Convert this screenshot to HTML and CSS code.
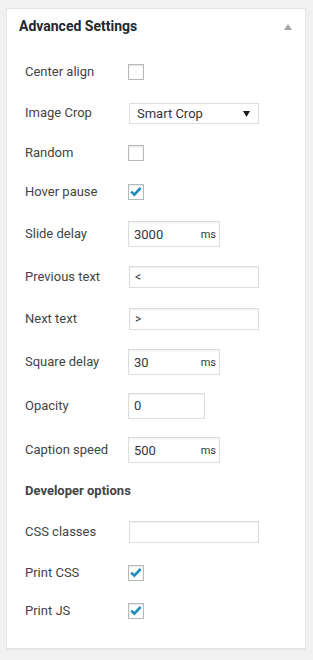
FILE: index.html
```html
<!DOCTYPE html>
<html lang="en">
<head>
<meta charset="utf-8">
<title>Advanced Settings</title>
<link rel="stylesheet" href="styles.css">
</head>
<body>
<div class="page">
  <section class="postbox">
    <header class="postbox-header">
      <h2 class="postbox-title">Advanced Settings</h2>
      <svg class="toggle" width="8" height="6" viewBox="0 0 8 6"><path d="M4 0 L8 6 L0 6 Z" fill="#a0a5aa"/></svg>
    </header>
    <div class="settings">
      <label class="lbl">Center align</label>
      <div class="ctl"><span class="checkbox"></span></div>

      <label class="lbl">Image Crop</label>
      <div class="ctl"><div class="select"><span>Smart Crop</span><svg width="7" height="6" viewBox="0 0 7 6"><path d="M0 0 L7 0 L3.5 6 Z" fill="#1e1e1e"/></svg></div></div>

      <label class="lbl">Random</label>
      <div class="ctl"><span class="checkbox"></span></div>

      <label class="lbl">Hover pause</label>
      <div class="ctl"><span class="checkbox"><svg width="14" height="14" viewBox="0 0 14 14"><path d="M2.2 6.6 L5.3 9.6 L11.6 3" fill="none" stroke="#1e8cbe" stroke-width="2.6"/></svg></span></div>

      <label class="lbl">Slide delay</label>
      <div class="ctl"><div class="unit-input"><input type="text" value="3000"><span class="unit">ms</span></div></div>

      <label class="lbl">Previous text</label>
      <div class="ctl"><input class="text-input" type="text" value="&lt;"></div>

      <label class="lbl">Next text</label>
      <div class="ctl"><input class="text-input" type="text" value="&gt;"></div>

      <label class="lbl">Square delay</label>
      <div class="ctl"><div class="unit-input"><input type="text" value="30"><span class="unit">ms</span></div></div>

      <label class="lbl">Opacity</label>
      <div class="ctl"><input class="short-input" type="text" value="0"></div>

      <label class="lbl">Caption speed</label>
      <div class="ctl"><div class="unit-input"><input type="text" value="500"><span class="unit">ms</span></div></div>

      <div class="section-title">Developer options</div>

      <label class="lbl">CSS classes</label>
      <div class="ctl"><input class="text-input" type="text" value=""></div>

      <label class="lbl">Print CSS</label>
      <div class="ctl"><span class="checkbox"><svg width="14" height="14" viewBox="0 0 14 14"><path d="M2.2 6.6 L5.3 9.6 L11.6 3" fill="none" stroke="#1e8cbe" stroke-width="2.6"/></svg></span></div>

      <label class="lbl">Print JS</label>
      <div class="ctl"><span class="checkbox"><svg width="14" height="14" viewBox="0 0 14 14"><path d="M2.2 6.6 L5.3 9.6 L11.6 3" fill="none" stroke="#1e8cbe" stroke-width="2.6"/></svg></span></div>
    </div>
  </section>
</div>
</body>
</html>
```

FILE: styles.css
```css
* { box-sizing: border-box; }

html, body {
  margin: 0;
  background: #f1f1f1;
  font-family: Roboto, "Liberation Sans", sans-serif;
  font-size: 13px;
  color: #444;
}

.page {
  padding: 8px 8px 11px 6px;
}

.postbox {
  width: 300px;
  background: #fff;
  border: 1px solid #e5e5e5;
  box-shadow: 0 1px 1px rgba(0, 0, 0, 0.04);
}

.postbox-header {
  display: flex;
  align-items: center;
  justify-content: space-between;
  padding: 7px 13px 8px 12px;
}

.postbox-title {
  margin: 0;
  font-size: 14px;
  line-height: 20px;
  font-weight: 700;
  color: #23282d;
}

.toggle {
  display: block;
  margin-top: 1px;
}

.settings {
  display: grid;
  grid-template-columns: 103px 1fr;
  grid-template-rows: 40px 42px 38px 40px 44px 42px 42px 44px 43px 46px 36px 46px 36px 40px;
  align-items: center;
  padding: 8px 12px 17px 18px;
}

.lbl {
  line-height: 18px;
  color: #444;
}

.ctl {
  display: flex;
  align-items: center;
}

.section-title {
  grid-column: 1 / -1;
  font-weight: 700;
  color: #444;
  line-height: 18px;
}

.checkbox {
  width: 16px;
  height: 16px;
  border: 1px solid #b4b9be;
  background: #fff;
  box-shadow: inset 0 1px 2px rgba(0, 0, 0, 0.1);
  display: flex;
  align-items: center;
  justify-content: center;
}

.checkbox svg { display: block; }

.select {
  margin-left: 1px;
  width: 130px;
  height: 21px;
  border: 1px solid #ddd;
  display: flex;
  align-items: center;
  justify-content: space-between;
  padding: 0 8px 0 7px;
  color: #32373c;
  font-size: 13px;
}

.select svg { display: block; margin-top: 1px; }

.text-input {
  margin-left: 1px;
  width: 130px;
  height: 22px;
  border: 1px solid #ddd;
  box-shadow: inset 0 1px 2px rgba(0, 0, 0, 0.07);
  font-family: inherit;
  font-size: 12px;
  color: #32373c;
  padding: 0 5px;
  outline: none;
}

.short-input {
  width: 77px;
  height: 26px;
  border: 1px solid #ddd;
  box-shadow: inset 0 1px 2px rgba(0, 0, 0, 0.07);
  font-family: inherit;
  font-size: 13px;
  color: #32373c;
  padding: 0 5px;
  outline: none;
}

.unit-input {
  width: 92px;
  height: 26px;
  border: 1px solid #ddd;
  box-shadow: inset 0 1px 2px rgba(0, 0, 0, 0.07);
  display: flex;
  align-items: center;
  padding: 0 3px 0 5px;
}

.unit-input input {
  flex: 1;
  min-width: 0;
  border: 0;
  padding: 0;
  background: transparent;
  font-family: inherit;
  font-size: 13px;
  color: #32373c;
  outline: none;
}

.unit {
  font-size: 11px;
  color: #32373c;
}
```
